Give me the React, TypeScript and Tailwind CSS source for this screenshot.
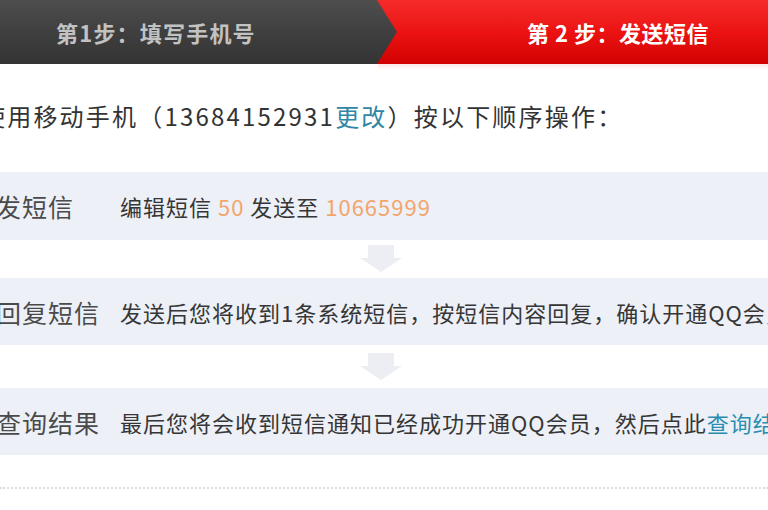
import React from "react";

const cjk = { fontFamily: '"Noto Sans CJK SC", "Noto Sans", sans-serif' };

function DownArrow() {
  return (
    <svg width="44" height="28" viewBox="0 0 44 28" className="block">
      <path d="M9 0 H35 V13 H43 L22 27 L1 13 H9 Z" fill="#eceef4" />
    </svg>
  );
}

function Row({
  label,
  children,
  h,
}: {
  label: string;
  children: React.ReactNode;
  h: string;
}) {
  return (
    <div className={`flex items-center bg-[#edf0f7] whitespace-nowrap ${h}`}>
      <div className="w-[124px] -ml-[4px] shrink-0 text-[25px] leading-[32px] tracking-[1px] text-[#4a4a4a]">
        {label}
      </div>
      <div className="text-[22px] leading-[30px] tracking-[1px] text-[#363636]">
        {children}
      </div>
    </div>
  );
}

export default function App() {
  return (
    <div className="w-[768px] h-[510px] overflow-hidden bg-white" style={cjk}>
      {/* header */}
      <div className="flex h-[64px] bg-linear-to-b from-[#f52a2a] via-[#ec1212] to-[#d20202]">
        <div className="flex items-center w-[398px] shrink-0 pl-[56px] bg-linear-to-b from-[#4e4e4e] via-[#3f3f3f] to-[#343434] [clip-path:polygon(0_0,377px_0,397px_50%,377px_100%,0_100%)]">
          <span className="text-[22px] font-bold tracking-[1.2px] text-[#c2c2c2] whitespace-nowrap">
            第1步：填写手机号
          </span>
        </div>
        <div className="flex items-center pl-[129px]">
          <span className="text-[22px] font-bold tracking-[0.5px] text-white whitespace-nowrap">
            第 2 步：发送短信
          </span>
        </div>
      </div>
      <div className="flex h-[6px]">
        <div className="w-[378px]" />
        <div className="flex-1 bg-linear-to-b from-[#fde4e4] to-white" />
      </div>

      {/* intro */}
      <div className="mt-[28px] -ml-[19px] whitespace-nowrap text-[24px] leading-[36px] tracking-[2.2px] text-[#333]">
        使用移动手机（13684152931<span className="text-[#2f86a6]">更改</span>）按以下顺序操作：
      </div>

      <div className="mt-[38px]">
        <Row label="发短信" h="h-[68px]">
          编辑短信 <span className="text-[#f3a56c]">50</span> 发送至{" "}
          <span className="text-[#f3a56c]">10665999</span>
        </Row>
        <div className="flex h-[38px] items-center justify-center pr-[6px]">
          <DownArrow />
        </div>
        <Row label="回复短信" h="h-[67px]">
          发送后您将收到1条系统短信，按短信内容回复，确认开通QQ会员
        </Row>
        <div className="flex h-[43px] items-center justify-center pr-[6px]">
          <DownArrow />
        </div>
        <Row label="查询结果" h="h-[67px]">
          最后您将会收到短信通知已经成功开通QQ会员，然后点此
          <span className="text-[#2a8db0]">查询结果</span>
        </Row>
      </div>

      <div className="mt-[32px] border-t-2 border-dotted border-[#dcdde2]" />
    </div>
  );
}
